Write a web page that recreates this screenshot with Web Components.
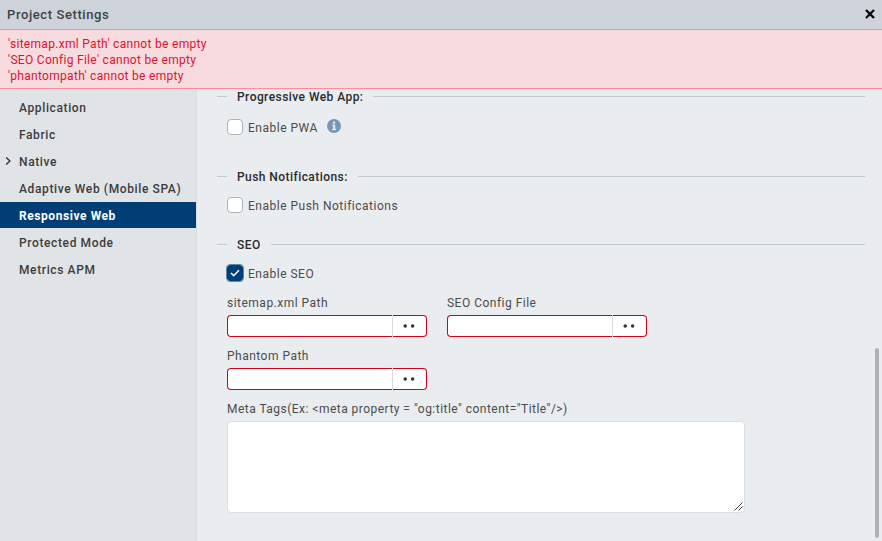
<!DOCTYPE html>
<html lang="en"><head><meta charset="utf-8"><title>Project Settings</title>
<style>html,body{margin:0;height:100%;overflow:hidden}body{font:12px/16px Roboto,"Liberation Sans",sans-serif;letter-spacing:.5px;color:#4c4c4c}</style>
</head><body><settings-dialog></settings-dialog>
<script>
function define(name, html, init) {
  customElements.define(name, class extends HTMLElement {
    constructor() {
      super();
      const t = document.createElement('template');
      t.innerHTML = html;
      this.attachShadow({ mode: 'open' }).append(t.content.cloneNode(true));
    }
    connectedCallback() { if (init) init(this, this.shadowRoot); }
  });
}

define('title-bar', `<style>
:host{display:flex;align-items:center;justify-content:space-between;height:29px;padding:0 7px;background:#ced3da;color:#404244;font-size:13px;font-weight:500;letter-spacing:.6px;box-sizing:border-box}
svg{display:block}
</style><span><slot></slot></span>
<svg width="10" height="10" viewBox="0 0 10 10" style="margin-top:-1px"><path d="M1 1L9 9M9 1L1 9" stroke="#000" stroke-width="2.3"/></svg>`);

define('error-banner', `<style>
:host{display:block;height:60px;box-sizing:border-box;border-top:1px solid #fc8d97;border-bottom:1px solid #fc8d97;background:#f8dbdf;color:#d9142f;padding:6px 8px;letter-spacing:.3px}
</style><slot></slot>`);

define('nav-item', `<style>
:host{display:flex;align-items:center;height:26px;margin-bottom:1px;font-weight:500;color:#3c3c3c;letter-spacing:.62px;white-space:nowrap}
:host([selected]){background:#003e75;color:#fff;font-weight:700;letter-spacing:.57px}
i{width:19px;display:flex;box-sizing:border-box;padding-left:5px}
span{padding-top:2px}
svg{display:none}:host([expandable]) svg{display:block}
</style><i><svg width="7" height="8" viewBox="0 0 7 8"><path d="M1.2 .5L5 4L1.2 7.5" fill="none" stroke="#222" stroke-width="1.2"/></svg></i><span><slot></slot></span>`);

define('section-heading', `<style>
:host{display:flex;align-items:center;height:16px;gap:10px;margin-left:-10px;color:#2b2b2b;font-weight:500;letter-spacing:.44px}
b{height:1px;background:#c3cace;width:10px;margin-bottom:1px}b.r{flex:1;width:auto}
</style><b></b><span><slot></slot></span><b class="r"></b>`);

define('check-box', `<style>
:host{display:flex;align-items:center;height:16px}
i{width:16px;height:16px;box-sizing:border-box;border:1px solid #aab5bd;border-radius:4px;background:#fff;margin-right:5px;display:flex;align-items:center;justify-content:center}
svg{display:none}
:host([checked]) i{background:#003e75;border-color:#003e75;outline:1px solid #5f87a8;outline-offset:0;border-radius:3px}
:host([checked]) svg{display:block}
span{position:relative;top:1px}
</style><i><svg width="10" height="8" viewBox="0 0 10 8"><path d="M1 4L3.7 6.7L9 1.2" fill="none" stroke="#fff" stroke-width="1.5"/></svg></i><span><slot></slot></span><slot name="hint"></slot>`);

define('info-icon', `<style>:host{display:block;margin:-2px 0 0 9px}svg{display:block}</style>
<svg width="14" height="14" viewBox="0 0 14 14"><circle cx="7" cy="7" r="7" fill="#7897b7"/><path d="M5.5 5.8H8V10H9V11H5.2V10H6.2V6.8H5.5ZM6 2.8H8V4.6H6Z" fill="#e9edf0" stroke="#e9edf0" stroke-width=".3"/></svg>`);

define('path-field', `<style>
:host{display:block;width:200px}
.l{height:16px;margin-bottom:4px;letter-spacing:.49px}
.f{display:flex;height:22px}
.a,.b{box-sizing:border-box;border:1px solid #d0021b;background:#fff}
.a{width:165px;border-right:0;border-radius:4px 0 0 4px}
.s{width:1px;background:#d8dcde}
.b{flex:1;border-left:0;border-radius:0 4px 4px 0;display:flex;align-items:center;justify-content:center}
svg{display:block;margin:-1px 1px 0 0}
</style><div class="l"><slot></slot></div><div class="f"><div class="a"></div><div class="s"></div><div class="b"><svg width="12" height="4" viewBox="0 0 12 4"><circle cx="2.2" cy="2" r="1.75" fill="#333"/><circle cx="9.6" cy="2" r="1.75" fill="#333"/></svg></div></div>`);

define('meta-field', `<style>
:host{display:block;width:518px}
.l{height:16px;margin-bottom:4px;letter-spacing:.47px}
.t{height:92px;box-sizing:border-box;border:1px solid #dcdfe1;border-radius:4px;background:#fff;display:flex;align-items:flex-end;justify-content:flex-end;padding:1px}
svg{display:block}
</style><div class="l"><slot></slot></div><div class="t"><svg width="9" height="9" viewBox="0 0 9 9"><path d="M.5 8.5L8.5 .5M4.5 8.5L8.5 4.5" stroke="#444" stroke-width="1"/></svg></div>`);

define('settings-dialog', `<style>
:host{display:flex;flex-direction:column;height:541px;background:#e9edf0}
.body{flex:1;display:flex;min-height:0}
nav{width:196px;border-right:1px solid #dcdfe1;background:#e1e4e7;padding-top:5px}
main{flex:1;padding:0 10px 0 30px;display:flex;flex-direction:column}
.rail{width:7px;display:flex;align-items:flex-end;padding-bottom:3px}
.thumb{width:4px;height:190px;border-radius:2px;background:#b1b1b1}
.grid{display:grid;grid-template-columns:200px 200px;gap:11px 20px;margin-top:14px}
meta-field{margin-top:11px}
</style>
<title-bar>Project Settings</title-bar>
<error-banner><div>'sitemap.xml Path' cannot be empty</div><div>'SEO Config File' cannot be empty</div><div>'phantompath' cannot be empty</div></error-banner>
<div class="body"><nav>
<nav-item>Application</nav-item><nav-item>Fabric</nav-item><nav-item expandable>Native</nav-item><nav-item>Adaptive Web (Mobile SPA)</nav-item><nav-item selected>Responsive Web</nav-item><nav-item>Protected Mode</nav-item><nav-item>Metrics APM</nav-item>
</nav><main>
<section-heading>Progressive Web App:</section-heading>
<check-box style="margin-top:14px">Enable PWA<info-icon slot="hint"></info-icon></check-box>
<section-heading style="margin-top:34px">Push Notifications:</section-heading>
<check-box style="margin-top:12px">Enable Push Notifications</check-box>
<section-heading style="margin-top:24px">SEO</section-heading>
<check-box checked style="margin-top:12px">Enable SEO</check-box>
<div class="grid"><path-field>sitemap.xml Path</path-field><path-field>SEO Config File</path-field><path-field>Phantom Path</path-field></div>
<meta-field>Meta Tags(Ex: &lt;meta property = "og:title" content="Title"/&gt;)</meta-field>
</main><div class="rail"><div class="thumb"></div></div></div>`);
</script></body></html>
